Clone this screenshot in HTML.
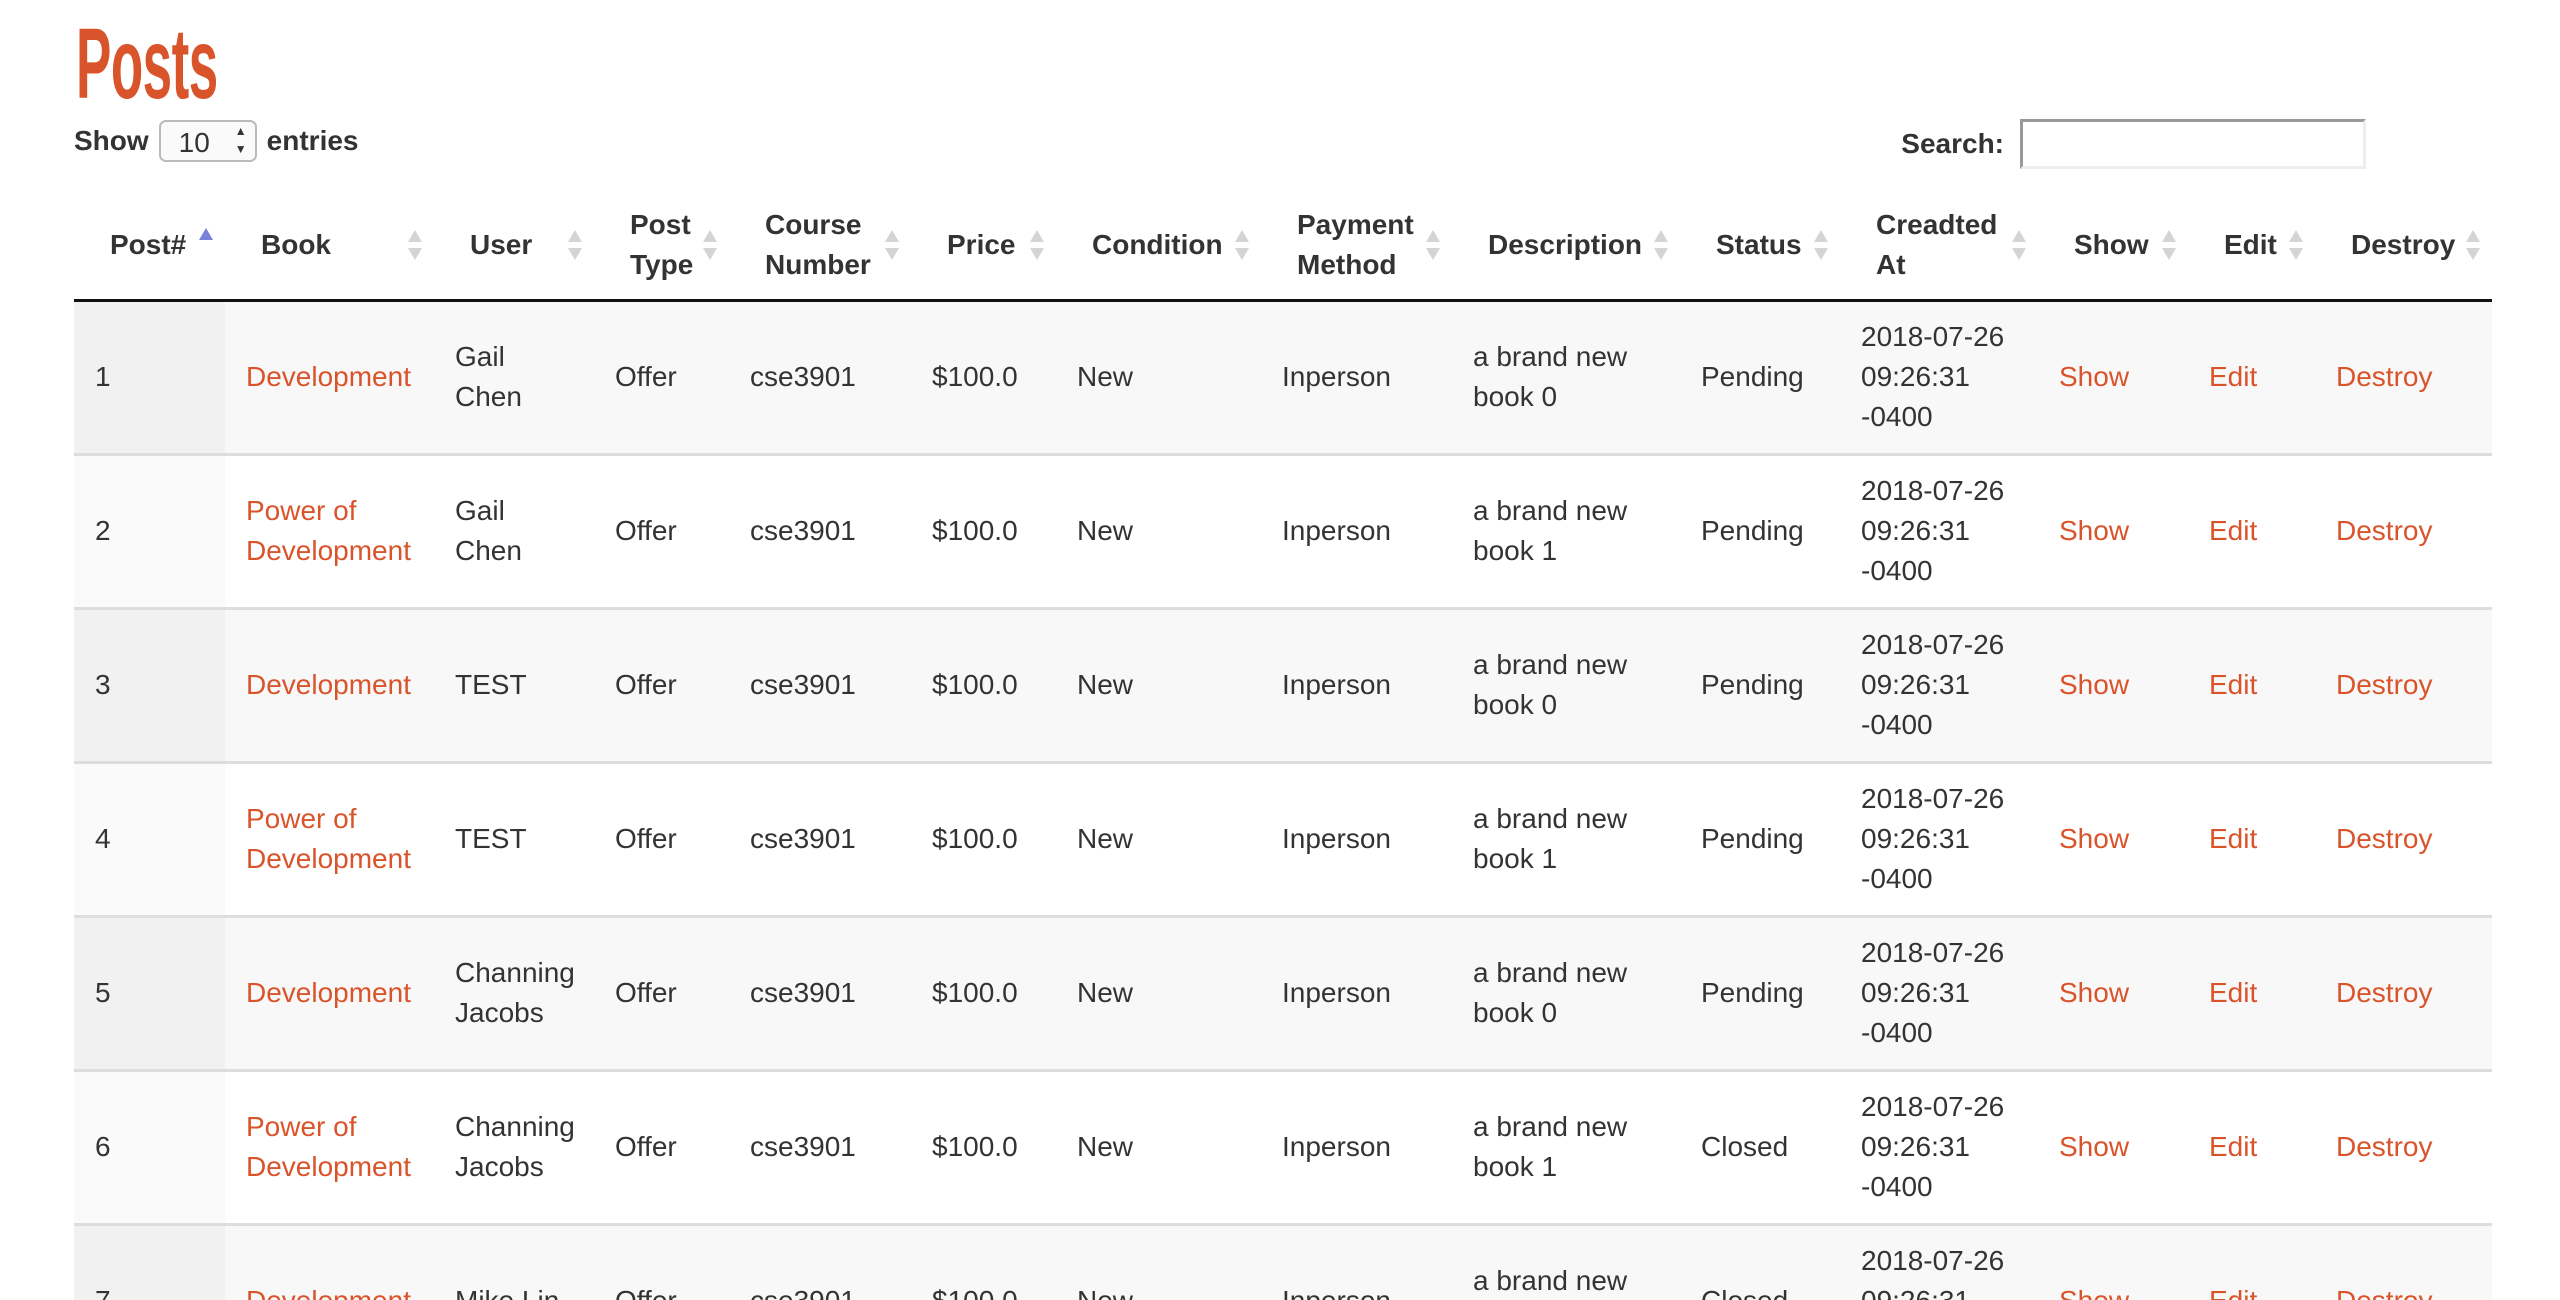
<!DOCTYPE html>
<html><head><meta charset="utf-8"><style>
*{box-sizing:border-box;margin:0;padding:0}
html,body{width:2560px;height:1300px;overflow:hidden}
body{position:relative;background:#fff;font-family:"Liberation Sans",Arial,sans-serif;color:#333;font-size:28px}
h1{position:absolute;left:76px;top:14px;font-size:100px;font-weight:bold;color:#d9542b;transform:scaleX(0.53);transform-origin:0 0;letter-spacing:-1px;line-height:100px}
.len{position:absolute;left:74px;top:120px;height:42px;line-height:42px;font-weight:bold;font-size:28px;display:flex;align-items:center}
.sel{display:inline-block;width:98px;height:42px;border:2px solid #bbb;border-radius:7px;margin:0 10px;font-weight:normal;padding-left:18px;position:relative;background:#fafafa}
.sel:after{content:"▲";position:absolute;right:8px;top:2px;font-size:12px;line-height:14px}
.sel:before{content:"▼";position:absolute;right:8px;top:20px;font-size:12px;line-height:14px}
.search{position:absolute;left:1900px;top:119px;font-weight:bold;font-size:28px;line-height:50px;display:flex}
.search span{display:inline-block;width:104px;text-align:right;margin-right:16px}
.search i{display:inline-block;width:346px;height:50px;border:3px solid #eee;border-top-color:#999;border-left-color:#999}
.wrap{position:absolute;left:74px;top:192px;width:2418px;height:1108px;overflow:hidden}
table{width:2418px;border-collapse:collapse;table-layout:fixed}
th{font-weight:bold;text-align:left;line-height:40px;height:108px;padding:0 30px 0 36px;border-bottom:3px solid #111;position:relative;vertical-align:middle}
th:after{content:"";position:absolute;right:12px;top:38px;border:7px solid transparent;border-bottom:12px solid #d4d4d4;border-top:0}
th:before{content:"";position:absolute;right:12px;top:56px;border:7px solid transparent;border-top:12px solid #d4d4d4;border-bottom:0}
th.asc:after{border-bottom-color:#7b80d8;top:36px}
th.asc:before{display:none}
td{line-height:40px;height:154px;padding:0 20px 0 21px;border-bottom:3px solid #ddd;vertical-align:middle}
tr.o td{background:#f8f8f8}
tr.o td:first-child{background:#f1f1f1}
tr.e td:first-child{background:#fafafa}
a{color:#d9542b;text-decoration:none}
</style></head><body>
<h1>Posts</h1>
<div class="len">Show<span class="sel">10</span>entries</div>
<div class="search"><span>Search:</span><i></i></div>
<div class="wrap">
<table>
<colgroup><col style="width:151px"><col style="width:209px"><col style="width:160px"><col style="width:135px"><col style="width:182px"><col style="width:145px"><col style="width:205px"><col style="width:191px"><col style="width:228px"><col style="width:160px"><col style="width:198px"><col style="width:150px"><col style="width:127px"><col style="width:177px"></colgroup>
<thead><tr><th class="asc">Post#</th><th>Book</th><th>User</th><th>Post Type</th><th>Course Number</th><th>Price</th><th>Condition</th><th>Payment Method</th><th>Description</th><th>Status</th><th>Creadted At</th><th>Show</th><th>Edit</th><th>Destroy</th></tr></thead>
<tbody>
<tr class="o"><td>1</td><td><a>Development</a></td><td>Gail Chen</td><td>Offer</td><td>cse3901</td><td>$100.0</td><td>New</td><td>Inperson</td><td>a brand new book 0</td><td>Pending</td><td>2018-07-26 09:26:31 -0400</td><td><a>Show</a></td><td><a>Edit</a></td><td><a>Destroy</a></td></tr>
<tr class="e"><td>2</td><td><a>Power of Development</a></td><td>Gail Chen</td><td>Offer</td><td>cse3901</td><td>$100.0</td><td>New</td><td>Inperson</td><td>a brand new book 1</td><td>Pending</td><td>2018-07-26 09:26:31 -0400</td><td><a>Show</a></td><td><a>Edit</a></td><td><a>Destroy</a></td></tr>
<tr class="o"><td>3</td><td><a>Development</a></td><td>TEST</td><td>Offer</td><td>cse3901</td><td>$100.0</td><td>New</td><td>Inperson</td><td>a brand new book 0</td><td>Pending</td><td>2018-07-26 09:26:31 -0400</td><td><a>Show</a></td><td><a>Edit</a></td><td><a>Destroy</a></td></tr>
<tr class="e"><td>4</td><td><a>Power of Development</a></td><td>TEST</td><td>Offer</td><td>cse3901</td><td>$100.0</td><td>New</td><td>Inperson</td><td>a brand new book 1</td><td>Pending</td><td>2018-07-26 09:26:31 -0400</td><td><a>Show</a></td><td><a>Edit</a></td><td><a>Destroy</a></td></tr>
<tr class="o"><td>5</td><td><a>Development</a></td><td>Channing Jacobs</td><td>Offer</td><td>cse3901</td><td>$100.0</td><td>New</td><td>Inperson</td><td>a brand new book 0</td><td>Pending</td><td>2018-07-26 09:26:31 -0400</td><td><a>Show</a></td><td><a>Edit</a></td><td><a>Destroy</a></td></tr>
<tr class="e"><td>6</td><td><a>Power of Development</a></td><td>Channing Jacobs</td><td>Offer</td><td>cse3901</td><td>$100.0</td><td>New</td><td>Inperson</td><td>a brand new book 1</td><td>Closed</td><td>2018-07-26 09:26:31 -0400</td><td><a>Show</a></td><td><a>Edit</a></td><td><a>Destroy</a></td></tr>
<tr class="o"><td>7</td><td><a>Development</a></td><td>Mike Lin</td><td>Offer</td><td>cse3901</td><td>$100.0</td><td>New</td><td>Inperson</td><td>a brand new book 0</td><td>Closed</td><td>2018-07-26 09:26:31 -0400</td><td><a>Show</a></td><td><a>Edit</a></td><td><a>Destroy</a></td></tr>
</tbody></table>
</div>
</body></html>
